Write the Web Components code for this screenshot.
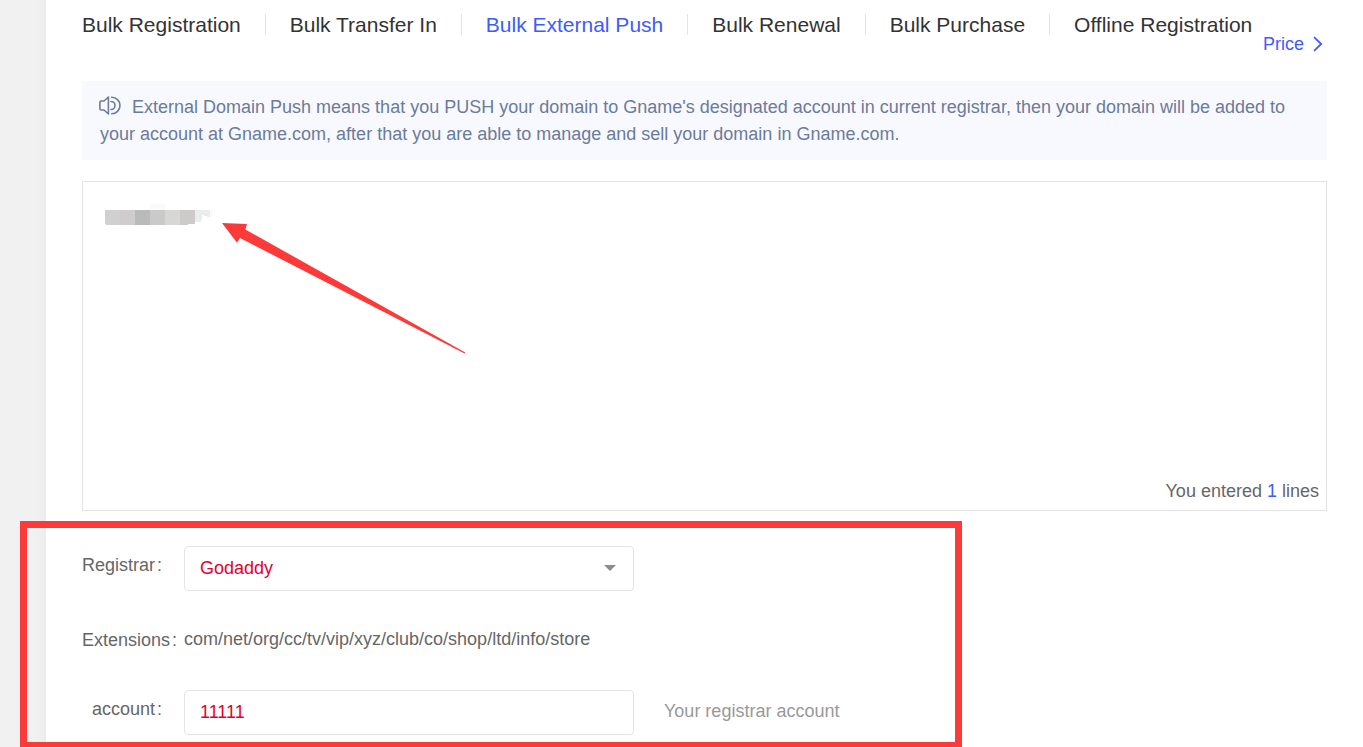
<!DOCTYPE html>
<html lang="en">
<head>
<meta charset="utf-8">
<title>Bulk External Push</title>
<style>
  html, body { margin: 0; height: 100%; }
  body { font: 18px/27px "Liberation Sans", Arial, "Noto Sans CJK SC", sans-serif; color: #666; background: #fff; overflow: hidden; }
</style>
</head>
<body>
<push-page>
  <tab-bar slot="tabs">
    <tab-link href="#registration">Bulk Registration</tab-link>
    <tab-link href="#transfer">Bulk Transfer In</tab-link>
    <tab-link href="#push" active>Bulk External Push</tab-link>
    <tab-link href="#renewal">Bulk Renewal</tab-link>
    <tab-link href="#purchase">Bulk Purchase</tab-link>
    <tab-link href="#offline">Offline Registration</tab-link>
  </tab-bar>
  <price-link slot="price">Price</price-link>
  <notice-banner>External Domain Push means that you PUSH your domain to Gname's designated account in current registrar, then your domain will be added to your account at Gname.com, after that you are able to manage and sell your domain in Gname.com.</notice-banner>
  <domain-editor count="1"></domain-editor>
  <push-form></push-form>
</push-page>

<script>
  const define = (name, html, setup) => {
    const template = document.createElement('template');
    template.innerHTML = html;
    customElements.define(name, class extends HTMLElement {
      constructor() {
        super();
        this.attachShadow({ mode: 'open' }).append(template.content.cloneNode(true));
      }
      connectedCallback() { if (setup) setup(this, this.shadowRoot); }
    });
  };

  define('push-page', `
    <style>
      :host { display: grid; grid-template-columns: 46px minmax(0, 1fr); min-height: 100vh; }
      aside { background: linear-gradient(to right, #f1f1f1 36px, #ececec); }
      main { padding: 14px 36px 0; }
      header { display: flex; flex-direction: column; margin-bottom: 28px; }
      ::slotted(price-link) { align-self: flex-end; }
    </style>
    <aside></aside>
    <main>
      <header><slot name="tabs"></slot><slot name="price"></slot></header>
      <slot></slot>
    </main>`);

  define('tab-bar', `
    <style>
      :host { display: block; }
      nav { display: flex; white-space: nowrap; }
    </style>
    <nav aria-label="Bulk tools"><slot></slot></nav>`);

  define('tab-link', `
    <style>
      :host { display: block; }
      :host(:not(:last-child)) { border-right: 1px solid #e4e4e4; padding-right: 24px; margin-right: 24px; }
      a { display: block; font-size: 21px; line-height: 21px; color: #333; text-decoration: none; }
      :host([active]) a { color: #3d5bff; }
    </style>
    <a><slot></slot></a>`,
    (host, root) => { root.querySelector('a').href = host.getAttribute('href'); });

  define('price-link', `
    <style>
      :host { display: block; padding-right: 4px; }
      a { display: flex; align-items: center; gap: 9px; line-height: 18px; color: #3d5bff; text-decoration: none; }
    </style>
    <a href="#price"><slot></slot><svg width="10" height="16" viewBox="0 0 10 16" fill="none" stroke="currentColor" stroke-width="1.8" aria-hidden="true"><path d="M1 1.2 8.2 8 1 14.8"/></svg></a>`);

  define('notice-banner', `
    <style>
      :host { display: block; margin-bottom: 21px; }
      p { margin: 0; padding: 13px 17px 12px 18px; background: #f8f9ff; color: #6b7b99; }
      svg { vertical-align: -2px; margin: 0 10px 0 -1px; }
    </style>
    <p><svg width="23" height="19" viewBox="0 0 23 19" fill="none" stroke="currentColor" stroke-width="1.6" stroke-linejoin="round" stroke-linecap="round" aria-hidden="true"><path d="M9.4 1v17L5 14H2.200Q.9 14 .9 12.700V6.300Q.9 5 2.200 5H5Z"/><path d="M12 5.500a4 4 0 0 1 0 8M12.700 1.200a8.300 8.300 0 0 1 0 16.600"/></svg><slot></slot></p>`);

  define('domain-editor', `
    <style>
      :host { display: block; position: relative; }
      .box { border: 1px solid #e4e4e4; display: flex; flex-direction: column; }
      textarea { display: block; box-sizing: border-box; width: 100%; height: 296px; border: 0; outline: 0; resize: none; padding: 22px; font: inherit; color: inherit; background: transparent; }
      output { text-align: right; padding: 0 7px 5px; }
      b { font-weight: normal; color: #3d5bff; }
      svg { position: absolute; left: 22px; top: 22px; pointer-events: none; }
    </style>
    <div class="box">
      <textarea aria-label="Domains, one per line"></textarea>
      <output>You entered <b></b> lines</output>
    </div>
    <svg width="362" height="152" viewBox="104 203 362 152" aria-hidden="true">
      <g shape-rendering="crispEdges">
        <path fill="#fafafa" d="M150 204h15v6h-15z"/>
        <path fill="#d0d0d0" d="M105 210h15v15h-14v-1h-1z"/>
        <path fill="#cecccc" d="M120 210h15v15h-15z"/>
        <path fill="#b9bbba" d="M135 210h15v15h-15z"/>
        <path fill="#cacaca" d="M150 210h15v15h-15z"/>
        <path fill="#d7d7d5" d="M165 210h15v15h-15z"/>
        <path fill="#cdcbca" d="M180 210h15v14h-7v1h-8z"/>
        <path fill="#e9edee" d="M195 210h15v7h-3v-1h-3v-1h-2v5h-1v2h-6z"/>
        <path fill="#fafafa" d="M210 210h3v3h-1v3h-2z"/>
      </g>
      <path fill="#fc3a39" d="M222 223 247 224 245.300 229.500 465.300 352.600 464.600 353.400 240 238 237 242.800Z"/>
    </svg>`,
    (host, root) => { root.querySelector('b').textContent = host.getAttribute('count'); });

  define('form-row', `
    <style>
      :host { display: flex; align-items: flex-start; }
      .label { flex: none; width: 80px; margin-right: 22px; line-height: 38px; text-align: right; white-space: nowrap; }
      :host([plain]) .label { line-height: 27px; }
      .field { display: flex; align-items: center; gap: 30px; }
      :host([plain]) .field { line-height: 25px; height: 27px; align-items: flex-start; }
    </style>
    <div class="label"><slot name="label"></slot></div>
    <div class="field"><slot></slot></div>`);

  define('push-form', `
    <style>
      :host { display: block; position: relative; padding-top: 35px; }
      form { display: grid; gap: 36px; }
      .control { position: relative; width: 450px; }
      select, input { display: block; box-sizing: border-box; width: 100%; height: 45px; margin: 0; padding: 0 15px; border: 1px solid #e4e4e4; border-radius: 4px; background: #fff; font: inherit; color: #e4002b; appearance: none; outline: 0; }
      .control svg { position: absolute; right: 18px; top: 19px; pointer-events: none; }
      .colon { margin-left: 2px; }
      .hint { color: #999; line-height: 25px; padding-bottom: 2px; }
      .mark { position: absolute; left: -62px; top: 10px; width: 942px; height: 226px; box-sizing: border-box; border: 7px solid #fc3a39; border-bottom-width: 5px; pointer-events: none; }
    </style>
    <form>
      <form-row>
        <label slot="label" for="registrar">Registrar<span class="colon">:</span></label>
        <div class="control">
          <select id="registrar"><option>Godaddy</option></select>
          <svg width="12" height="6" viewBox="0 0 12 6" aria-hidden="true"><path fill="#8c8c8c" d="M0 0h12L6 6z"/></svg>
        </div>
      </form-row>
      <form-row plain>
        <span slot="label">Extensions<span class="colon">:</span></span>
        <span>com/net/org/cc/tv/vip/xyz/club/co/shop/ltd/info/store</span>
      </form-row>
      <form-row>
        <label slot="label" for="account">account<span class="colon">:</span></label>
        <div class="control"><input id="account" type="text" value="11111"></div>
        <span class="hint">Your registrar account</span>
      </form-row>
    </form>
    <div class="mark"></div>`);
</script>
</body>
</html>
